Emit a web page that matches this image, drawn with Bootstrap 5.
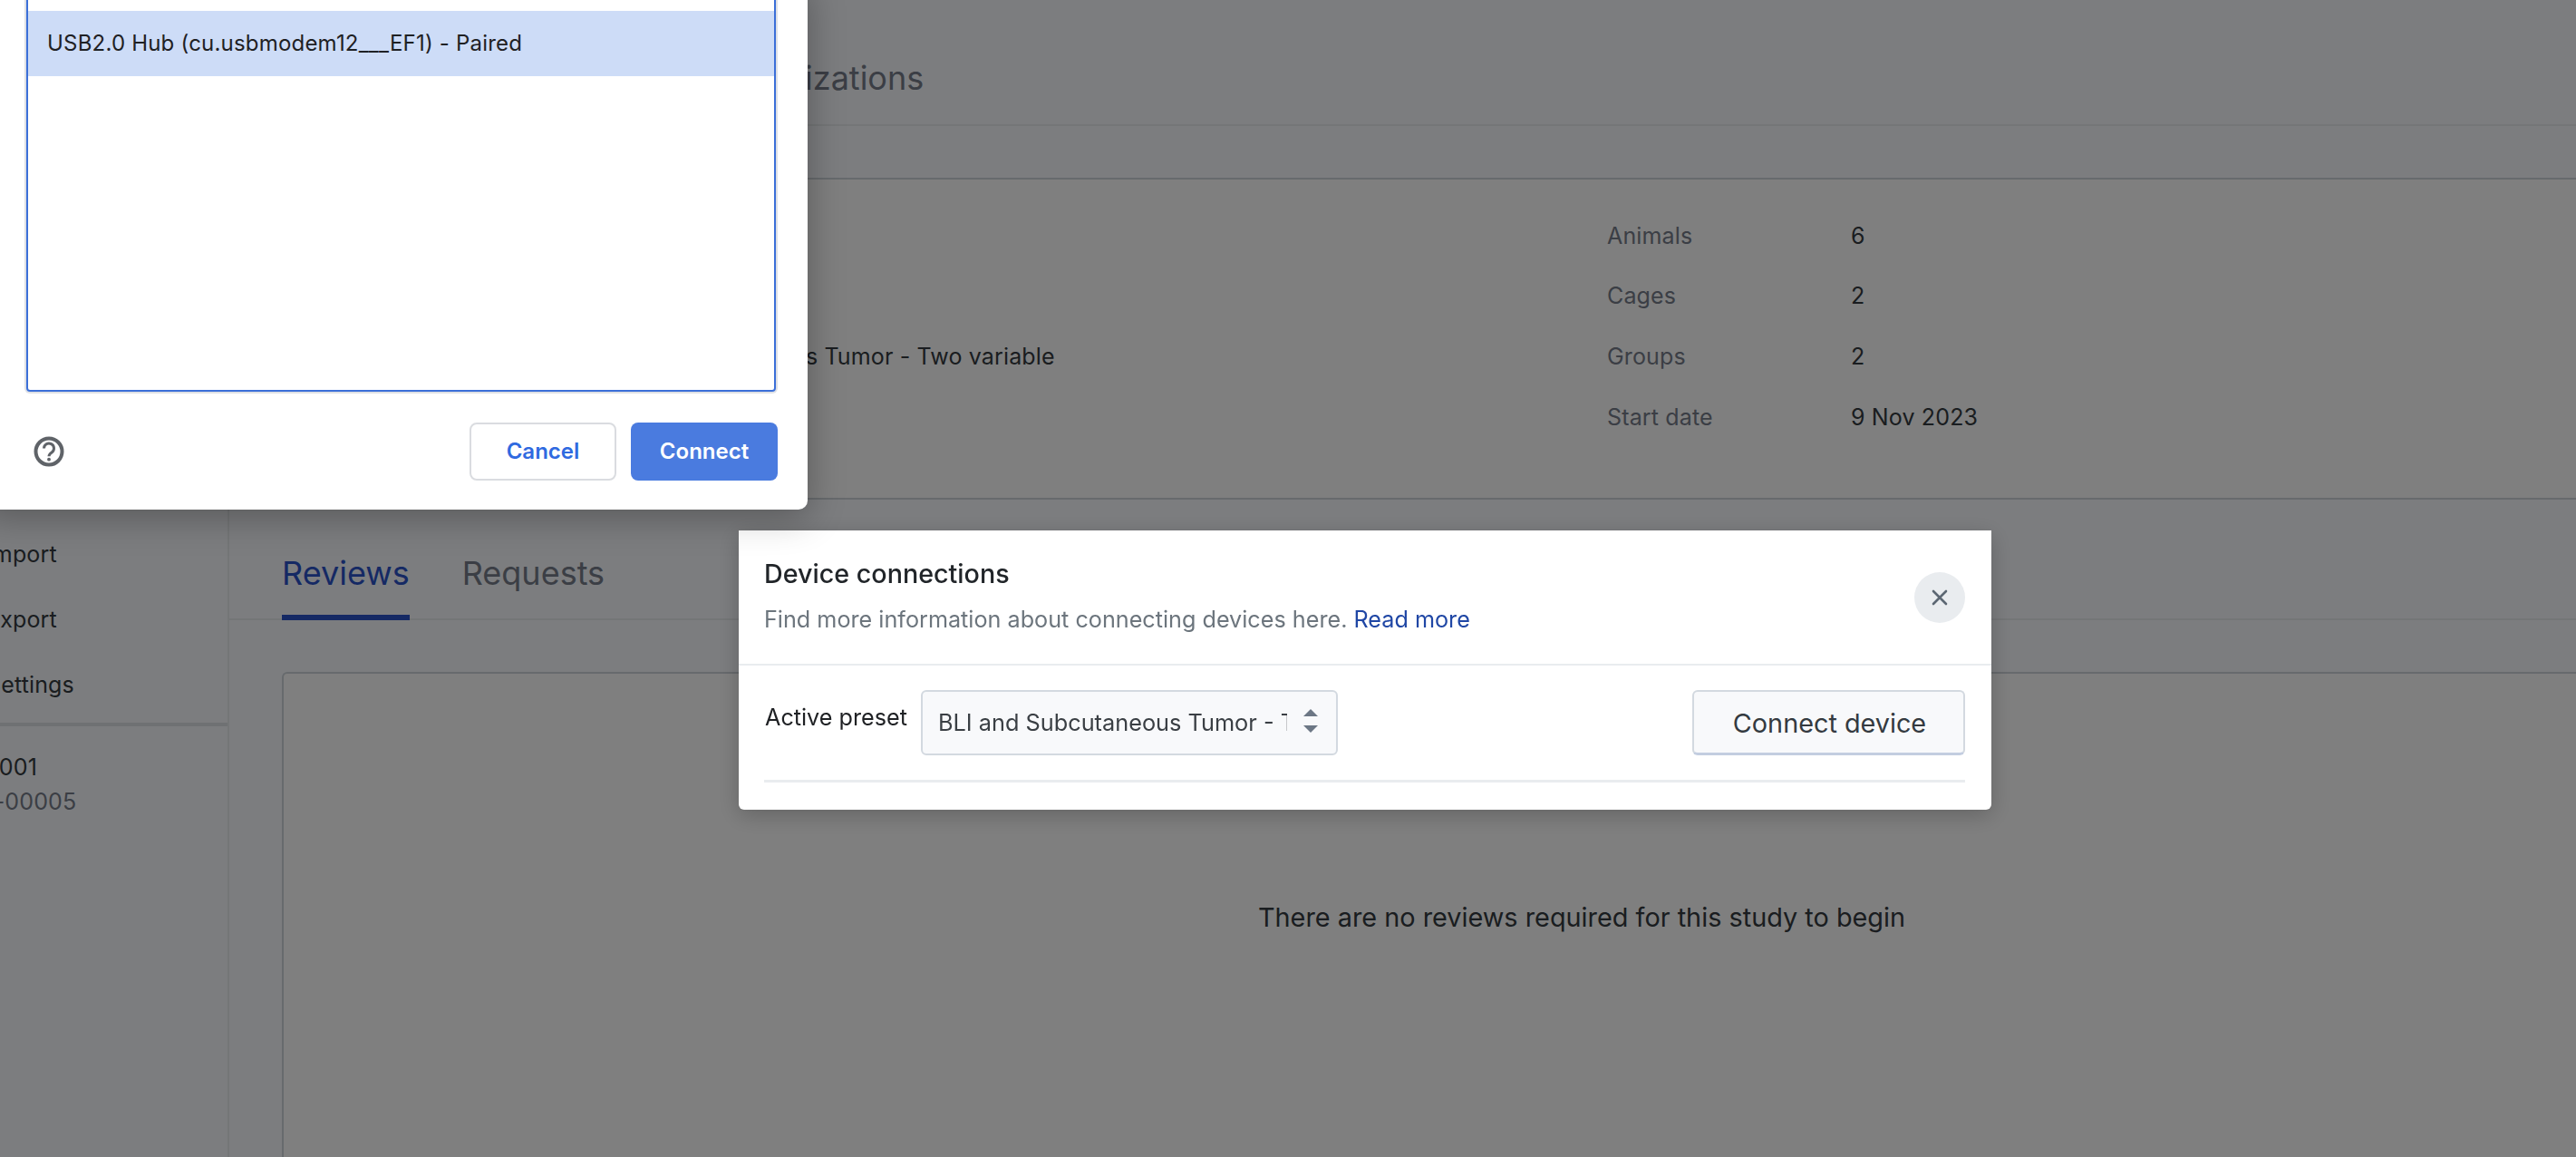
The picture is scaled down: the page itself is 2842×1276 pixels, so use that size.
<!DOCTYPE html>
<html lang="en">
<head>
<meta charset="utf-8">
<title>Device connections</title>
<link href="https://cdn.jsdelivr.net/npm/bootstrap@5.3.0/dist/css/bootstrap.min.css" rel="stylesheet">
<style>
html,body{height:100%;}
body{font-family:Inter,"Liberation Sans",sans-serif;overflow:hidden;background:#fff;color:#343a40;font-size:25px;letter-spacing:.15px;}
.page-shell{height:1276px;width:2842px;overflow:hidden;}
.side-col{width:253px;flex:none;background:#f9fbfe;border-right:2px solid #e9ecef;padding-top:575px;}
.side-item{height:72px;line-height:72px;font-size:25px;margin-left:-15px;color:#343a40;white-space:nowrap;}
.side-sep{border-top:4px solid #dee2e6;margin-top:6px;margin-bottom:26px;}
.side-a{font-size:25px;line-height:38px;margin-left:-29px;}
.side-b{font-size:25px;line-height:38px;margin-left:-37px;color:#767d8a;}
.main-col{flex:1 1 auto;background:#f9fbfe;min-width:0;}
.tab-top{height:139px;border-bottom:2px solid #e9ecef;padding-left:531px;padding-top:63px;font-size:36px;line-height:46px;color:#767d8a;letter-spacing:0;}
.gap-strip{height:59px;border-bottom:2px solid #ced4da;}
.detail-box{height:353px;background:#fff;border-bottom:2px solid #ced4da;display:flex;}
.detail-left{width:1520px;padding-left:381px;padding-top:177px;color:#343a40;}
.detail-right{padding-top:29px;}
.detail-line{display:flex;height:66.7px;align-items:center;}
.detail-key{width:269px;color:#767d8a;}
.rev-tabs{height:133px;border-bottom:2px solid #e9ecef;padding:58px 0 0 58px;display:flex;gap:58px;font-size:36px;line-height:46px;color:#767d8a;letter-spacing:0;}
.rev-tab{height:74px;}
.rev-tab.on{color:#2a52c9;border-bottom:6px solid #2a52c9;padding-bottom:0;height:75px;}
.rev-panel{margin:57px 0 0 58px;height:700px;background:#fff;border:2px solid #ced4da;border-right:0;border-bottom:0;border-top-left-radius:6px;text-align:center;padding-top:247px;padding-left:335px;font-size:28.85px;color:#343a40;letter-spacing:0;}
.modal-backdrop{opacity:.5;}
.chooser{position:fixed;z-index:1060;left:-20px;top:-20px;width:911px;height:582px;background:#fff;border-radius:0 0 10px 10px;box-shadow:0 8px 40px rgba(0,0,0,.3);}
.chooser-list{position:absolute;left:49px;top:0;width:827px;height:452px;border:2px solid #3b6fd8;border-radius:4px;box-shadow:0 0 0 2px #dfe1e5;}
.chooser-row{margin-top:30px;height:72px;background:#cddcf7;display:flex;align-items:center;padding-left:21px;font-size:24px;color:#1f2124;letter-spacing:.2px;}
.chooser-foot{position:absolute;left:57px;right:33px;top:486px;height:64px;display:flex;align-items:center;}
.ch-btn{width:162px;height:64px;font-size:24px;font-weight:600;border-radius:8px;padding:0;letter-spacing:0;}
.ch-cancel{background:#fff;border:2px solid #dadce0;color:#2f6ae0;}
.ch-ok{background:#4a7bdf;border:0;color:#fff;margin-left:16px;}
.dev-dialog{position:fixed;z-index:1055;left:815px;top:585px;width:1382px;height:308px;border:0;border-radius:0 0 6px 6px;box-shadow:0 6px 24px rgba(0,0,0,.22);background:#fff;}
.dev-head{height:149px;border-bottom:2px solid #e9ecef;padding:26px 29px 0 28px;display:flex;justify-content:space-between;}
.dev-title{font-size:28.7px;line-height:44px;font-weight:500;color:#212529;letter-spacing:0;}
.dev-sub{font-size:25.2px;line-height:38px;color:#6c757d;margin-top:9px;letter-spacing:0;}
.dev-sub a{color:#2047a5;text-decoration:none;}
.dev-close{width:56px;height:56px;border-radius:50%;background:#e9ecef;border:0;margin-top:20px;padding:0;display:flex;align-items:center;justify-content:center;}
.dev-body{padding:27px 29px 0 28px;}
.dev-row{display:flex;align-items:flex-start;height:102px;border-bottom:3px solid #e9ecef;}
.dev-label{font-size:25.2px;line-height:38px;margin-top:11px;margin-right:15px;margin-left:1px;color:#1f2124;width:157px;white-space:nowrap;letter-spacing:0;}
.dev-select{width:460px;height:72px;font-size:25.3px;padding:0 54px 0 17px;background-color:#f8f9fb;border:2px solid #d3d9e0;border-radius:6px;color:#3a3f44;font-family:Inter,"Liberation Sans",sans-serif;letter-spacing:0;background-position:right 18px center;background-size:20px 32px;background-image:url("data:image/svg+xml,%3Csvg xmlns='http://www.w3.org/2000/svg' viewBox='0 0 20 32'%3E%3Cpath fill='%236c7785' d='M10 1l8 8H2zM10 27l8-8H2z'/%3E%3C/svg%3E");}
.dev-btn{width:301px;height:72px;margin-left:auto;font-size:28.8px;background:#f8f9fb;border:2px solid #d3d9e0;border-bottom:3px solid #c3cde0;border-radius:6px;color:#343a40;padding:2px 0 0 2px;letter-spacing:0;}
</style>
</head>
<body>
<div class="page-shell d-flex">
  <aside class="side-col">
    <div class="side-item">Import</div>
    <div class="side-item">Export</div>
    <div class="side-item">Settings</div>
    <div class="side-sep"></div>
    <div class="side-a">S-001</div>
    <div class="side-b">ST-00005</div>
  </aside>
  <main class="main-col">
    <div class="tab-top">Organizations</div>
    <div class="gap-strip"></div>
    <div class="detail-box">
      <div class="detail-left">BLI and Subcutaneous Tumor - Two variable</div>
      <div class="detail-right">
        <div class="detail-line"><span class="detail-key">Animals</span><span>6</span></div>
        <div class="detail-line"><span class="detail-key">Cages</span><span>2</span></div>
        <div class="detail-line"><span class="detail-key">Groups</span><span>2</span></div>
        <div class="detail-line"><span class="detail-key">Start date</span><span>9 Nov 2023</span></div>
      </div>
    </div>
    <div class="rev-tabs">
      <div class="rev-tab on">Reviews</div>
      <div class="rev-tab">Requests</div>
    </div>
    <div class="rev-panel">There are no reviews required for this study to begin</div>
  </main>
</div>
<div class="modal-backdrop show"></div>
<div class="modal-content dev-dialog">
  <div class="dev-head">
    <div>
      <div class="dev-title">Device connections</div>
      <div class="dev-sub">Find more information about connecting devices here. <a href="#">Read more</a></div>
    </div>
    <button class="dev-close" type="button" aria-label="Close">
      <svg width="20" height="20" viewBox="0 0 20 20"><path d="M3 3l14 14M17 3L3 17" stroke="#5c6773" stroke-width="2.6" stroke-linecap="round" fill="none"/></svg>
    </button>
  </div>
  <div class="dev-body">
    <div class="dev-row">
      <label class="dev-label" for="preset">Active preset</label>
      <select id="preset" class="form-select dev-select"><option>BLI and Subcutaneous Tumor - Two variable</option></select>
      <button class="btn dev-btn" type="button">Connect device</button>
    </div>
  </div>
</div>
<div class="chooser">
  <div class="chooser-list">
    <div class="chooser-row">USB2.0 Hub (cu.usbmodem12___EF1) - Paired</div>
  </div>
  <div class="chooser-foot">
    <svg width="34" height="34" viewBox="0 0 34 34" class="me-auto"><circle cx="17" cy="17" r="14.5" fill="none" stroke="#5f6368" stroke-width="4"/><path d="M11.5 13.5a5.5 5.5 0 1 1 8.6 4.5c-1.9 1.3-3.1 2.3-3.1 4.2" fill="none" stroke="#5f6368" stroke-width="3"/><circle cx="17" cy="25.7" r="1.9" fill="#5f6368"/></svg>
    <button class="btn ch-btn ch-cancel" type="button">Cancel</button>
    <button class="btn ch-btn ch-ok" type="button">Connect</button>
  </div>
</div>
<script src="https://cdn.jsdelivr.net/npm/bootstrap@5.3.0/dist/js/bootstrap.bundle.min.js"></script>
</body>
</html>
